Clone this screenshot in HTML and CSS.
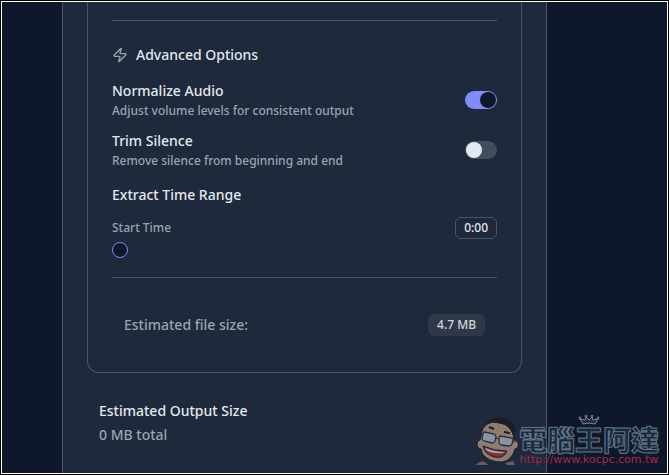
FILE: index.html
```html
<!DOCTYPE html>
<html lang="en">
<head>
<meta charset="utf-8">
<title>Audio Converter</title>
<link rel="stylesheet" href="styles.css">
</head>
<body>
<main class="page">
  <section class="panel">
    <form class="card">
      <hr class="divider">
      <h2 class="heading">
        <svg class="heading-icon" viewBox="0 0 24 24" aria-hidden="true"><path d="M4 14a1 1 0 0 1-.78-1.63l9.9-10.2a.5.5 0 0 1 .86.46l-1.92 6.02A1 1 0 0 0 13 10h7a1 1 0 0 1 .78 1.63l-9.9 10.2a.5.5 0 0 1-.86-.46l1.92-6.02A1 1 0 0 0 11 14z"/></svg>
        Advanced Options
      </h2>
      <div class="options">
        <div class="row">
          <div class="stack">
            <label class="label" for="normalize">Normalize Audio</label>
            <p class="hint">Adjust volume levels for consistent output</p>
          </div>
          <input class="switch" type="checkbox" role="switch" id="normalize" checked>
        </div>
        <div class="row">
          <div class="stack">
            <label class="label" for="trim">Trim Silence</label>
            <p class="hint">Remove silence from beginning and end</p>
          </div>
          <input class="switch" type="checkbox" role="switch" id="trim">
        </div>
      </div>
      <h3 class="label range-title">Extract Time Range</h3>
      <div class="row">
        <label class="hint" for="start">Start Time</label>
        <output class="badge badge-outline" for="start">0:00</output>
      </div>
      <input class="slider" type="range" id="start" min="0" max="100" value="0">
      <hr class="divider">
      <div class="row estimate">
        <span class="muted">Estimated file size:</span>
        <span class="badge badge-filled">4.7 MB</span>
      </div>
    </form>
    <div class="summary">
      <h3 class="label">Estimated Output Size</h3>
      <p class="muted">0 MB total</p>
    </div>
  </section>
  <aside class="watermark">
    <svg class="face" viewBox="0 0 46 50" aria-hidden="true">
      <path d="M3 48q4-5 9-3l3 3zM32 46l8-2 2 4h-8z" fill="#6d5c5b"/>
      <path d="M12 9C14 1 24 0 30 1c8 1 13 7 13 17l-6-4z" fill="#1b1d27"/>
      <path d="M9 14C12 6 19 4 26 6c8 1 14 6 15 17 5 0 6 8 1 9-2 8-8 13-14 13-9 0-19-4-20-13-5-1-5-8-1-9z" fill="#8f7c70" stroke="#1b1d27"/>
      <path d="m16 10 5 2M31 15l6 1" fill="none" stroke="#1b1d27" stroke-width="2"/>
      <path d="m12 15 9 2q2 1 2 3l-1 4q-1 2-3 2l-8-2q-2-1-2-3l1-4q0-2 2-2zM28 19l10 2q2 0 2 2l-1 4q-1 2-3 2l-8-1q-2-1-2-3v-4q0-2 2-2z" fill="#8b93a0" stroke="#28303e" stroke-width="1.3"/>
      <path d="m23 21 3 1M40 24l2 1M7 18l3 1" fill="none" stroke="#28303e" stroke-width="1.3"/>
      <path d="M10 29q11 5 24 5-3 8-12 6-10-2-12-11z" fill="#812f36" stroke="#1b1d27"/>
      <path d="M12 31q10 4 20 4l-2 1q-10 1-17-3z" fill="#a4a7af"/>
    </svg>
    <div class="brand">
      <svg class="crown" viewBox="0 0 22 10" aria-hidden="true"><path d="m5 9-3-5 5 1 1-3 3 3 3-3 1 3 5-1-3 5q-6-2-12 0z"/><circle cx="2" cy="3" r="1"/><circle cx="8" cy="1" r="1"/><circle cx="14" cy="1" r="1"/><circle cx="20" cy="3" r="1"/></svg>
      <span class="brand-name" lang="zh-Hant">電腦王阿達</span>
      <span class="brand-url">http://www.kocpc.com.tw</span>
    </div>
  </aside>
</main>
</body>
</html>
```

FILE: styles.css
```css
* {
  box-sizing: border-box;
  margin: 0;
}

body {
  border: 1px solid #000;
  background: #0f172a;
  color: #e2e8f0;
  font: 500 14px/20px "Noto Sans", sans-serif;
  min-height: 100vh;
  display: flex;
}

.page {
  position: relative;
  flex: 1;
  display: flex;
  border: 1px solid #fff;
  padding: 0 120px 0 60px;
}

.panel {
  flex: 1;
  padding: 0 24px 16px;
  background: #1e293b;
  border: solid #4b5563;
  border-width: 0 1px;
}

.card {
  padding: 18px 24px 24px;
  border: 1px solid #4b5563;
  border-top: 0;
  border-radius: 0 0 12px 12px;
}

.divider {
  height: 1px;
  border: 0;
  background: #4b5563;
}

.heading {
  display: flex;
  align-items: center;
  gap: 8px;
  margin: 24px 0 16px;
  font: inherit;
}

.heading-icon {
  width: 16px;
  height: 16px;
  fill: none;
  stroke: #9ca3af;
  stroke-width: 2;
  stroke-linejoin: round;
}

.options {
  display: grid;
  gap: 12px;
}

.row {
  display: flex;
  align-items: center;
  justify-content: space-between;
}

.stack {
  display: grid;
  gap: 2px;
}

.label {
  font: inherit;
}

.hint {
  color: #9ca3af;
  font-size: 12px;
  line-height: 16px;
}

.muted {
  color: #9ca3af;
}

.switch {
  appearance: none;
  display: flex;
  width: 32px;
  height: 18px;
  padding: 1px;
  border-radius: 9px;
  background: #434e5d;
}

.switch::before {
  content: "";
  width: 16px;
  height: 16px;
  border-radius: 50%;
  background: #e2e8f0;
}

.switch:checked {
  justify-content: flex-end;
  background: #818cf8;
}

.switch:checked::before {
  background: #0f172a;
}

.range-title {
  margin: 16px 0 12px;
}

.badge {
  padding: 2px 8px;
  border: 1px solid transparent;
  border-radius: 6px;
  font-size: 12px;
  line-height: 16px;
}

.badge-outline {
  border-color: #4b5563;
}

.badge-filled {
  background: #2f3848;
  color: #d1d5db;
}

.slider {
  appearance: none;
  display: block;
  width: 100%;
  height: 16px;
  margin: 3px 0 19px;
  background: transparent;
}

.slider::-webkit-slider-thumb {
  appearance: none;
  width: 16px;
  height: 16px;
  border: 1px solid #818cf8;
  border-radius: 50%;
  background: #0f172a;
}

.estimate {
  margin-top: 24px;
  padding: 12px;
}

.summary {
  display: grid;
  gap: 4px;
  margin-top: 16px;
  padding: 12px;
}

.watermark {
  position: absolute;
  right: 8px;
  bottom: 6px;
  display: flex;
  align-items: flex-end;
}

.face {
  width: 46px;
  height: 50px;
}

.brand {
  display: grid;
  justify-items: center;
}

.crown {
  width: 22px;
  height: 10px;
  fill: #1b2b40;
  stroke: #7e8998;
}

.brand-name {
  color: #142b42;
  font: 900 28px/28px "Noto Sans CJK TC", sans-serif;
  -webkit-text-stroke: 1px #697585;
}

.brand-url {
  color: #a32b48;
  font: 400 11px/14px "DejaVu Sans", sans-serif;
}
```
